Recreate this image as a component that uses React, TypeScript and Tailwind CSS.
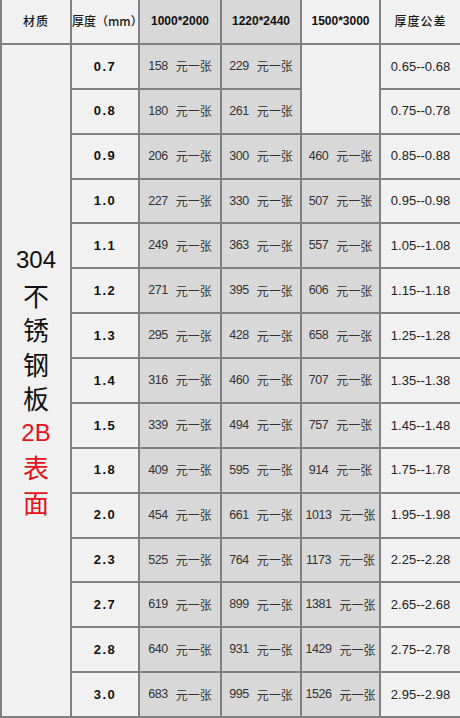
import React from 'react';

type Row = [string, string, string, string | null, string];

const rows: Row[] = [
  ['0.7', '158', '229', null, '0.65--0.68'],
  ['0.8', '180', '261', null, '0.75--0.78'],
  ['0.9', '206', '300', '460', '0.85--0.88'],
  ['1.0', '227', '330', '507', '0.95--0.98'],
  ['1.1', '249', '363', '557', '1.05--1.08'],
  ['1.2', '271', '395', '606', '1.15--1.18'],
  ['1.3', '295', '428', '658', '1.25--1.28'],
  ['1.4', '316', '460', '707', '1.35--1.38'],
  ['1.5', '339', '494', '757', '1.45--1.48'],
  ['1.8', '409', '595', '914', '1.75--1.78'],
  ['2.0', '454', '661', '1013', '1.95--1.98'],
  ['2.3', '525', '764', '1173', '2.25--2.28'],
  ['2.7', '619', '899', '1381', '2.65--2.68'],
  ['2.8', '640', '931', '1429', '2.75--2.78'],
  ['3.0', '683', '995', '1526', '2.95--2.98'],
];

const cjk = "font-['Noto_Sans_CJK_SC',sans-serif]";
const light = 'bg-[#f1f1f1]';
const dark = 'bg-[#d8d8d8]';

// one price cell: number + unit
const Price: React.FC<{ value: string }> = ({ value }) => (
  <div className={`${dark} flex items-center justify-center text-[12.5px] text-[#333]`}>
    <span className="font-['Liberation_Sans',sans-serif] tracking-[-0.5px]">{value}</span>
    <span className={`${cjk} ml-[8px] text-[12px]`}>元一张</span>
  </div>
);

export default function App() {
  return (
    <div className="w-[460px] h-[718px] bg-[#808080] grid grid-cols-[68px_66px_80px_78px_77px_1fr] grid-rows-[repeat(16,minmax(0,1fr))] gap-[2px] pl-[2px] pb-[2px]">
      {/* header */}
      <div className={`${light} ${cjk} flex items-center justify-center text-[12px] font-medium text-[#1a1a1a] tracking-[1px]`}>材质</div>
      <div className={`${light} ${cjk} flex items-center justify-center text-[12px] font-medium text-[#1a1a1a]`}>厚度（mm）</div>
      <div className={`${dark} flex items-center justify-center font-['Liberation_Sans',sans-serif] text-[12px] font-bold text-[#111]`}>1000*2000</div>
      <div className={`${dark} flex items-center justify-center font-['Liberation_Sans',sans-serif] text-[12px] font-bold text-[#111]`}>1220*2440</div>
      <div className={`${light} flex items-center justify-center font-['Liberation_Sans',sans-serif] text-[12px] font-bold text-[#111]`}>1500*3000</div>
      <div className={`${light} ${cjk} flex items-center justify-center text-[12px] font-medium text-[#1a1a1a] tracking-[1px]`}>厚度公差</div>

      {/* material label */}
      <div className={`${light} row-span-15 flex flex-col items-center justify-center leading-[34.5px] text-[26px] pt-[2px]`}>
        <span className="font-['Liberation_Sans',sans-serif] text-[24px] text-[#111]">304</span>
        <span className={`${cjk} text-[#111]`}>不</span>
        <span className={`${cjk} text-[#111]`}>锈</span>
        <span className={`${cjk} text-[#111]`}>钢</span>
        <span className={`${cjk} text-[#111]`}>板</span>
        <span className="font-['Liberation_Sans',sans-serif] text-[24px] text-[#e3141c]">2B</span>
        <span className={`${cjk} text-[#e3141c]`}>表</span>
        <span className={`${cjk} text-[#e3141c]`}>面</span>
      </div>

      {rows.map(([t, a, b, c, tol], i) => (
        <React.Fragment key={t}>
          <div className={`${light} flex items-center justify-center font-['Liberation_Sans',sans-serif] text-[13px] font-bold tracking-[1.5px] text-[#111]`}>{t}</div>
          <Price value={a} />
          <Price value={b} />
          {c ? <Price value={c} /> : i === 0 ? <div className={`${light} row-span-2`} /> : null}
          <div className={`${light} flex items-center justify-center font-['Liberation_Sans',sans-serif] text-[13px] text-[#222]`}>{tol}</div>
        </React.Fragment>
      ))}
    </div>
  );
}
